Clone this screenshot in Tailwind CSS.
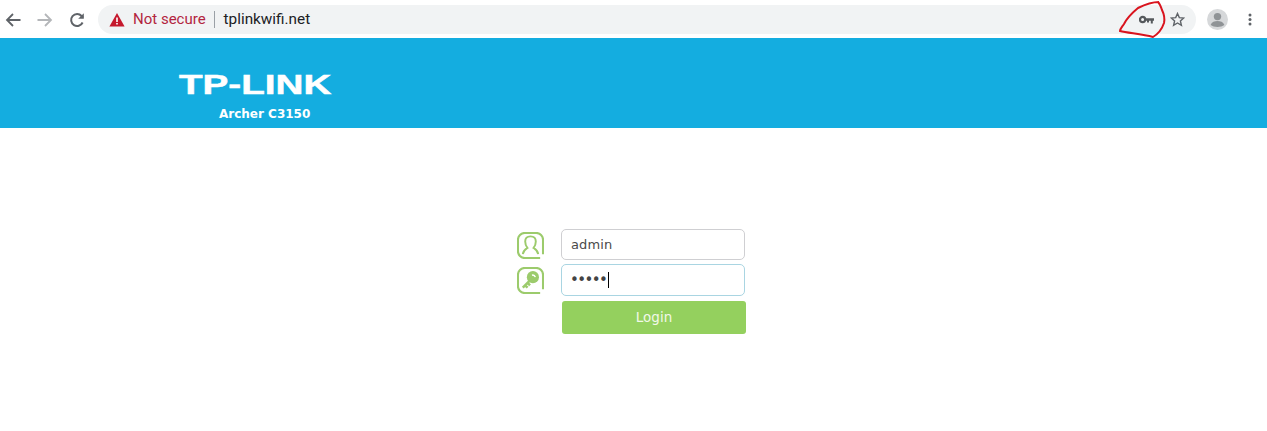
<!DOCTYPE html>
<html lang="en">
<head>
  <meta charset="UTF-8">
  <title>tplinkwifi.net</title>
  <script src="https://cdn.jsdelivr.net/npm/@tailwindcss/browser@4"></script>
</head>
<body class="relative h-[431px] overflow-hidden bg-white font-['Roboto',sans-serif]">
  <!-- Browser toolbar -->
  <div class="flex h-[38px] items-center bg-white pt-[1px]">
    <svg class="ml-[5px] h-4 w-4 text-[#5f6368]" viewBox="0 0 16 16" fill="none" stroke="currentColor" stroke-width="1.8"><path d="M15.500 8H2M8 2L2 8l6 6"/></svg>
    <svg class="ml-[16px] h-4 w-4 text-[#b4b6b9]" viewBox="0 0 16 16" fill="none" stroke="currentColor" stroke-width="1.8"><path d="M.5 8H14M8 2l6 6-6 6"/></svg>
    <svg class="ml-[16px] h-4 w-4 text-[#5f6368]" viewBox="0 0 16 16" fill="none" stroke="currentColor" stroke-width="2"><path d="M13.600 10.500A6 6 0 1 1 12.600 4L14 5.600"/><path d="M14.800 1.200v5.600H9.200z" fill="currentColor" stroke="none"/></svg>
    <div class="ml-[13px] flex h-[29px] w-[1098px] items-center rounded-full bg-[#f1f3f4]">
      <svg class="ml-[11px] h-[15px] w-[16px]" viewBox="0 0 16 15"><path d="M8 1l7.600 13.400H.4z" fill="#c5192d"/><path d="M7.200 5.500h1.600v4.600H7.200zM7.200 11h1.600v1.600H7.200z" fill="#fff"/></svg>
      <span class="ml-[8px] text-[15px] text-[#b3253f]">Not secure</span>
      <span class="ml-[8px] h-[17px] w-px bg-[#9aa0a6]"></span>
      <span class="ml-[9px] text-[15.300px] text-[#202124]">tplinkwifi.net</span>
      <svg class="ml-auto mr-[1px] h-[10px] w-[15px] text-[#55595c]" viewBox="0 0 15 10" fill="none"><circle cx="3.600" cy="4.500" r="2.600" stroke="currentColor" stroke-width="2.200"/><path d="M6 3.200h9v2.600h-1.200v2.700h-2V5.800H10v1.800H8V5.800H6z" fill="currentColor"/></svg>
      <svg class="ml-[15px] mr-[11px] h-[15px] w-[15px] text-[#5f6368]" viewBox="0 0 15 15" fill="none" stroke="currentColor" stroke-width="1.400"><path d="M7.500 1.500l1.800 4.100 4.400.4-3.300 2.900 1 4.400-3.900-2.300-3.900 2.300 1-4.400L1.300 6l4.400-.4z"/></svg>
    </div>
    <svg class="ml-[11px] h-[21px] w-[21px]" viewBox="0 0 21 21"><circle cx="10.500" cy="10.500" r="10.500" fill="#d6d8da"/><circle cx="10.500" cy="7.600" r="3.700" fill="#8f9396"/><path d="M3.600 16c1.200-3 4-3.900 6.900-3.900s5.700.9 6.900 3.900c-3.400 2.600-10.400 2.600-13.800 0z" fill="#8f9396"/></svg>
    <svg class="ml-[20px] h-[13px] w-[4px] text-[#5f6368]" viewBox="0 0 4 13" fill="currentColor"><circle cx="2" cy="2" r="1.500"/><circle cx="2" cy="6.500" r="1.500"/><circle cx="2" cy="11" r="1.500"/></svg>
  </div>

  <!-- Router header -->
  <header class="h-[90px] bg-[#14ade0] pl-[179px] pt-[34px] text-white">
    <div class="w-0 origin-left scale-x-[1.43] whitespace-nowrap font-['Liberation_Sans',sans-serif] text-[27px] leading-[27px] font-bold [-webkit-text-stroke:0.5px_white]">TP-LINK</div>
    <div class="ml-[40px] mt-[8px] whitespace-nowrap font-['DejaVu_Sans',sans-serif] text-[12px] leading-[14px] font-bold">Archer C3150</div>
  </header>

  <!-- Login form -->
  <form class="ml-[517px] mt-[101px] grid w-[230px] grid-cols-[28px_184px] gap-x-[16px] font-['DejaVu_Sans',sans-serif]">
    <svg class="mt-[3px] h-[27px] w-[27px]" viewBox="0 0 28 28" fill="none" stroke="#9ccb6c" stroke-width="2">
      <path d="M24 27H8a7 7 0 0 1-7-7V8a7 7 0 0 1 7-7h12a7 7 0 0 1 7 7v15" stroke-width="2.200"/>
      <path d="M6 23c.6-4 2.500-5 4.800-6.500C9.300 14.500 8.500 12 8.500 9.800 8.500 6.500 10.500 4.500 14 4.500s5.500 2 5.500 5.300c0 2.200-.8 4.700-2.300 6.700 2.300 1.500 4.200 2.500 4.800 6.500"/>
    </svg>
    <input value="admin" readonly class="h-[31px] w-[184px] rounded-[5px] border border-[#cfcfd2] bg-white pl-[9px] text-[13px] tracking-[0.1px] text-[#4a4a4a] outline-none">

    <svg class="mt-[7px] h-[27px] w-[27px]" viewBox="0 0 28 28" fill="none" stroke="#9ccb6c" stroke-width="2.200">
      <path d="M24 27H8a7 7 0 0 1-7-7V8a7 7 0 0 1 7-7h12a7 7 0 0 1 7 7v15"/>
      <circle cx="16.500" cy="10.500" r="6.300" fill="#9ccb6c" stroke="none"/>
      <path d="M13 14.500L6 21.500M8.500 19l2.500 2.500M11 16.500l2.500 2.500" stroke-width="2.600"/>
      <path d="M15.500 8.500a3 3 0 0 1 3.500 2" stroke="#fff" stroke-width="1.500"/>
    </svg>
    <div class="mt-[4px] flex h-[32px] w-[184px] items-center rounded-[5px] border border-[#a9d5e2] bg-white pl-[8px]">
      <span class="text-[15px] leading-none tracking-[-1.600px] text-[#444]">•••••</span>
      <span class="ml-[2px] h-[16px] w-px bg-black"></span>
    </div>

    <button type="button" class="col-start-2 ml-[1px] mt-[5px] h-[33px] w-[184px] rounded-[3px] bg-[#94d05e] text-[13.500px] font-medium text-[#f1f8e8]">Login</button>
  </form>

  <!-- Red marker scribble over the key icon -->
  <svg class="absolute left-[1115px] top-0 h-[40px] w-[52px]" viewBox="0 0 52 40" fill="none" stroke="#d9141e" stroke-width="2">
    <path d="M44 2C36 2 29 5 23 8 17 13 12 18 9 24 7 27 5 29 5 31c8 2 22 3 33 6 5-3 9-8 11-14 1-5 0-9-2-13-1-3-2-6-4-8"/>
  </svg>
</body>
</html>
